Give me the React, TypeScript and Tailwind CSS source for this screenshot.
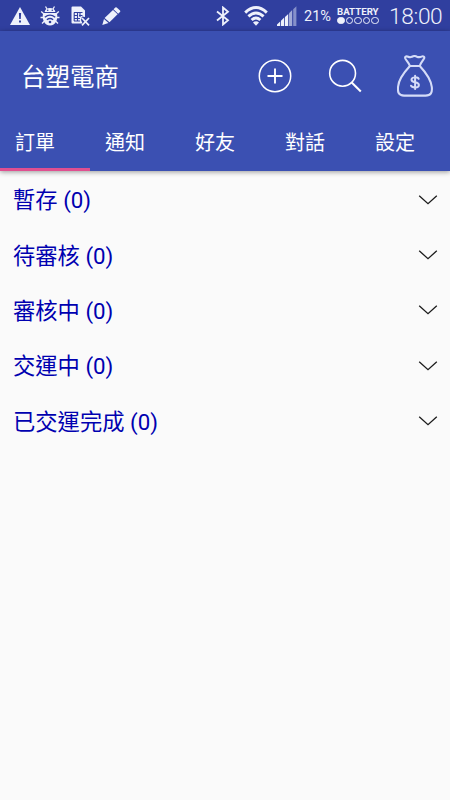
import React from 'react';

interface IconProps {
  className?: string;
}

const WarningIcon: React.FC<IconProps> = ({ className }) => (
  <svg className={className} width="20" height="18" viewBox="0 0 20 18">
    <path d="M10 0 L20 18 H0 Z" fill="#eef1fb" />
    <path d="M8.9 6 H11.1 L10.8 12 H9.2 Z M9 13.4 H11 V15.4 H9 Z" fill="#303f9f" />
  </svg>
);

const BugIcon: React.FC<IconProps> = ({ className }) => (
  <svg className={className} width="20" height="20" viewBox="0 0 20 20" fill="none">
    <path d="M5.5 0.5 L7 3 M14.5 0.5 L13 3 M1.2 5.5 L4 8 M18.8 5.5 L16 8 M0.5 11.5 H3.5 M19.5 11.5 H16.5 M2 17.5 L4.5 15 M18 17.5 L15.5 15" stroke="#eef1fb" strokeWidth="1.3" />
    <path d="M4.6 6 C5 0.8 15 0.8 15.4 6 Z" fill="#eef1fb" />
    <path d="M3.2 7 H16.8 C18.6 13 15.5 19.5 10 19.5 C4.5 19.5 1.4 13 3.2 7 Z" fill="#eef1fb" />
    <path d="M4.8 11.3 Q10 7 15.2 11.3 M6.9 13.8 Q10 11.2 13.1 13.8" stroke="#303f9f" strokeWidth="1.4" />
    <circle cx="10" cy="16" r="1.3" fill="#303f9f" />
    <circle cx="7.7" cy="4.2" r="0.8" fill="#303f9f" />
    <circle cx="12.3" cy="4.2" r="0.8" fill="#303f9f" />
  </svg>
);

const SimErrorIcon: React.FC<IconProps> = ({ className }) => (
  <svg className={className} width="19" height="20" viewBox="0 0 19 20" fill="none">
    <path d="M0.5 1.5 Q0.5 0.5 1.5 0.5 H10 L14 4.5 V11 L11 10.5 L10 14 L11.5 17.5 H1.5 Q0.5 17.5 0.5 16.5 Z" fill="#eef1fb" />
    <path d="M3 6.5 H11.5 M3 9.5 H6 M8 9.5 H11.5 M3 12.5 H9 M3 15 H9 M3.2 6.5 V15 M6.5 6.5 V15 M9 6.5 V11" stroke="#303f9f" strokeWidth="1.1" />
    <path d="M11 12 L18 19.3 M18 12 L11 19.3" stroke="#eef1fb" strokeWidth="1.7" />
  </svg>
);

const PencilIcon: React.FC<IconProps> = ({ className }) => (
  <svg className={className} width="19" height="18" viewBox="0 0 19 18" fill="#eef1fb">
    <path d="M13.3 0.6 Q14 0 14.7 0.6 L18 3.6 Q18.7 4.3 18 5 L16.2 6.7 L11.5 2.3 Z" />
    <path d="M11 3 L15.6 7.3 L7.5 15.3 L2.6 11 Z" />
    <path d="M2 12 L6.5 16 L0.3 18 Z" />
  </svg>
);

const BluetoothIcon: React.FC<IconProps> = ({ className }) => (
  <svg className={className} width="14" height="20" viewBox="0 0 14 20" fill="none" stroke="#eef1fb" strokeWidth="1.8">
    <path d="M1 5.5 L12 14.2 L7 18.5 V1.5 L12 5.8 L1 14.5" />
  </svg>
);

const WifiIcon: React.FC<IconProps> = ({ className }) => (
  <svg className={className} width="24" height="20" viewBox="0 0 24 20" fill="none" stroke="#eef1fb" strokeWidth="2.9">
    <path d="M1.2 6.6 Q12 -3.4 22.8 6.6" />
    <path d="M4.4 10.4 Q12 3.6 19.6 10.4" />
    <path d="M7.6 14 Q12 10 16.4 14" />
    <path d="M9 16.4 Q12 14 15 16.4 L12 19.8 Z" fill="#eef1fb" stroke="none" />
  </svg>
);

const SignalIcon: React.FC<IconProps> = ({ className }) => (
  <svg className={className} width="20" height="20" viewBox="0 0 20 20">
    <path d="M0 20 V18.5 L3.2 15.5 V20 Z M4 20 V14.7 L7.2 11.6 V20 Z M8 20 V11 L11.2 7.9 V20 Z" fill="#eef1fb" />
    <path d="M12 20 V7.2 L15.2 4.1 V20 Z" fill="#a2abd8" />
    <path d="M16.2 20 V3.2 L19.4 0.2 V20 Z" fill="#8590ca" />
  </svg>
);

const AddIcon: React.FC<IconProps> = ({ className }) => (
  <svg className={className} width="34" height="34" viewBox="0 0 34 34" fill="none" stroke="#fff">
    <circle cx="17" cy="17" r="15.7" strokeWidth="1.5" />
    <path d="M9.5 17 H24.5 M17 9.5 V24.5" strokeWidth="1.9" />
  </svg>
);

const SearchIcon: React.FC<IconProps> = ({ className }) => (
  <svg className={className} width="34" height="34" viewBox="0 0 34 34" fill="none" stroke="#fff">
    <circle cx="14.6" cy="14.3" r="12.9" strokeWidth="1.6" />
    <path d="M23.7 23.5 L32.8 32.4" strokeWidth="2.1" />
  </svg>
);

const MoneyBagIcon: React.FC<IconProps> = ({ className }) => (
  <svg className={className} width="36" height="42" viewBox="0 0 36 42" fill="none" stroke="#d5dcf8" strokeWidth="2.1" strokeLinecap="round" strokeLinejoin="round">
    <path d="M13 11 C11.8 7.5 8.8 5.2 8.2 3.2 C7.8 1.4 9.6 1 11.2 1.8 C12.8 2.6 13.8 2.5 15 1.7 C16.7 0.8 18.3 0.8 20 1.7 C21.7 2.5 23 2.3 24.5 1.6 C26.3 0.8 27.8 1.6 27.1 3.4 C26.1 5.8 23.5 7.8 22.8 11 Z" />
    <path d="M13 11 C9.5 14.8 2 22.5 1.1 31.5 C0.4 37.5 1.8 40.6 7 40.6 H28.5 C34 40.6 35.4 37.5 34.8 32 C33.7 22.8 26.5 15 22.8 11" />
    <path d="M21.7 23.8 C21 22 14.5 21.5 14.5 24.7 C14.5 28.2 21.9 26.3 21.9 30 C21.9 33.5 14.8 33 14 30.7 M18.1 20.7 V34" strokeWidth="2" />
  </svg>
);

const ChevronIcon: React.FC<IconProps> = ({ className }) => (
  <svg className={className} width="20" height="10" viewBox="0 0 20 10" fill="none" stroke="#1c1c1c" strokeWidth="1.3">
    <path d="M1.2 0.8 L10 8.7 L18.8 0.8" />
  </svg>
);

const tabs = ['訂單', '通知', '好友', '對話', '設定'];

const orderGroups = [
  { name: '暫存', count: 0 },
  { name: '待審核', count: 0 },
  { name: '審核中', count: 0 },
  { name: '交運中', count: 0 },
  { name: '已交運完成', count: 0 },
];

const StatusBar: React.FC = () => (
  <div className="flex h-[31px] items-center bg-[#303f9f] text-[#eef1fb]">
    <WarningIcon className="ml-[10px]" />
    <BugIcon className="ml-[10px]" />
    <SimErrorIcon className="ml-[11px]" />
    <PencilIcon className="ml-[12px]" />
    <BluetoothIcon className="ml-[95px]" />
    <WifiIcon className="ml-[14px]" />
    <SignalIcon className="ml-[9px]" />
    <span className="ml-[7px] w-[33px] pt-[3px] text-[14.5px] leading-none whitespace-nowrap">21%</span>
    <div className="w-[43px]">
      <div className="text-[9.7px] leading-[10px] font-bold">BATTERY</div>
      <div className="flex gap-px">
        {[true, false, false, false, false].map((on, i) => (
          <span
            key={i}
            className={`size-[7.5px] shrink-0 rounded-full border border-[#eef1fb] ${on ? 'bg-[#eef1fb]' : ''}`}
          />
        ))}
      </div>
    </div>
    <span className="ml-[9px] pt-[4px] text-[22.8px] leading-none font-light tracking-[-0.4px]">18:00</span>
  </div>
);

const AppBar: React.FC = () => (
  <header className="relative bg-[#3b50b2] text-white shadow-[0_1px_5px_rgba(0,0,0,0.4)]">
    <div className="flex h-[90px] items-center pl-[21px]">
      <h1 className="pt-[4px] text-[24.5px] leading-none">台塑電商</h1>
      <AddIcon className="ml-[139px]" />
      <SearchIcon className="ml-[36px]" />
      <MoneyBagIcon className="ml-[35px]" />
    </div>
    <nav className="flex h-[50px]">
      {tabs.map((tab, i) => (
        <button
          key={tab}
          className={`h-full w-[90px] border-b-[3px] pr-[20px] pb-[4px] text-center text-[20px] leading-none ${
            i === 0 ? 'border-[#e04f90]' : 'border-transparent'
          }`}
        >
          {tab}
        </button>
      ))}
    </nav>
  </header>
);

export default function App() {
  return (
    <div className="flex h-[800px] w-[450px] flex-col overflow-hidden bg-[#fafafa] font-[Roboto,'Noto_Sans_CJK_TC',sans-serif]">
      <StatusBar />
      <AppBar />
      <ul className="pt-[1px]">
        {orderGroups.map((group) => (
          <li key={group.name} className="flex h-[55.4px] items-center justify-between pr-[12px] pl-[13px]">
            <span className="pt-[1.5px] text-[22.3px] leading-none text-[#0000b0]">
              {group.name} ({group.count})
            </span>
            <ChevronIcon />
          </li>
        ))}
      </ul>
    </div>
  );
}
